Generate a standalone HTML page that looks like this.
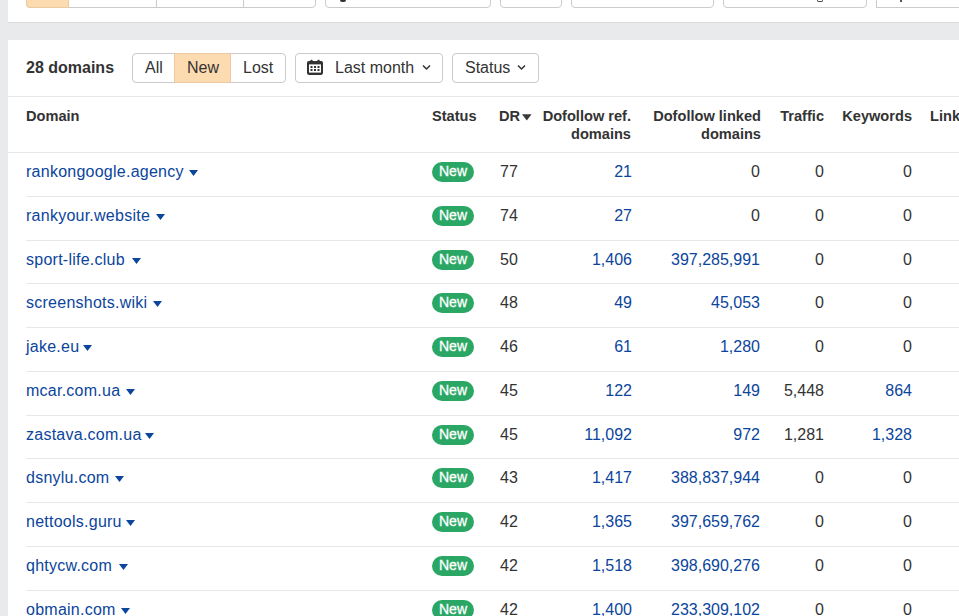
<!DOCTYPE html>
<html><head><meta charset="utf-8"><style>
*{margin:0;padding:0;box-sizing:border-box}
html,body{width:959px;height:616px;overflow:hidden;background:#e9eaec;font-family:"Liberation Sans",sans-serif;color:#333}
.card{position:absolute;left:8px;right:0;background:#fff}
.a{position:absolute;white-space:nowrap}
.btn{position:absolute;border:1px solid #cbcbcb;border-radius:4px;background:#fff}
.hd{font-weight:bold;font-size:14.6px;line-height:18px;color:#333}
.r{text-align:right}
.lnk{color:#0b459c}
.line{position:absolute;height:1px;background:#e7e7e8}
.badge{position:absolute;width:42px;height:20px;border-radius:10px;background:#2ba765;color:#fff;font-size:14px;font-weight:normal;-webkit-text-stroke:0.3px #fff;text-align:center;line-height:18px}
.caret{position:absolute;width:0;height:0;border-left:4px solid transparent;border-right:4px solid transparent;border-top:5px solid #1447a0}
.cell{font-size:16px;line-height:20px}
</style></head><body>

<div class="card" style="top:0;height:23px;border-bottom:1px solid #dcdde0"></div>
<div class="btn" style="left:26px;top:-30px;width:290px;height:38px"><div style="position:absolute;left:-1px;top:-1px;width:43px;height:38px;background:#fddbb0;border:1px solid #ecc9a0;border-radius:0 0 0 4px"></div><div style="position:absolute;left:129px;top:0;width:1px;height:100%;background:#cbcbcb"></div><div style="position:absolute;left:216px;top:0;width:1px;height:100%;background:#cbcbcb"></div></div>
<div class="btn" style="left:325px;top:-30px;width:166px;height:38px"></div>
<div class="a" style="left:340px;top:0;width:6px;height:2px;background:#333;border-radius:0 0 3px 3px"></div>
<div class="btn" style="left:500px;top:-30px;width:62px;height:38px"></div>
<div class="btn" style="left:571px;top:-30px;width:143px;height:38px"></div>
<div class="btn" style="left:723px;top:-30px;width:144px;height:38px"></div>
<div class="a" style="left:817px;top:0;width:6px;height:2px;border:1.5px solid #444;border-top:none;border-radius:0 0 3px 3px"></div>
<div class="btn" style="left:876px;top:-30px;width:100px;height:38px;border-radius:0"></div>
<div class="a" style="left:900px;top:0;width:1.5px;height:2px;background:#555"></div>
<div class="card" style="top:40px;bottom:0"></div>
<div class="a" style="left:26px;top:58px;font-size:16px;font-weight:bold;line-height:20px;color:#333">28 domains</div>
<div class="btn" style="left:132px;top:53px;width:154px;height:30px">
<div style="position:absolute;left:41px;top:-1px;width:57px;height:30px;background:#fddbb0;border:1px solid #ecc9a0"></div>
<div class="a" style="left:12px;top:4px;font-size:16px;line-height:20px">All</div>
<div class="a" style="left:54px;top:4px;font-size:16px;line-height:20px">New</div>
<div class="a" style="left:110px;top:4px;font-size:16px;line-height:20px">Lost</div>
</div>
<div class="btn" style="left:295px;top:53px;width:148px;height:30px">
<svg style="position:absolute;left:11px;top:5px" width="17" height="17" viewBox="0 0 17 17"><rect x="0" y="2" width="16" height="13.9" rx="1.8" fill="#333"/><rect x="3.3" y="0.8" width="2.4" height="3" rx="1" fill="#333"/><rect x="10.3" y="0.8" width="2.4" height="3" rx="1" fill="#333"/><rect x="2" y="5.4" width="12" height="8.2" fill="#fff"/><g fill="#333"><rect x="3.5" y="7" width="2" height="2"/><rect x="7" y="7" width="2" height="2"/><rect x="10.5" y="7" width="2" height="2"/><rect x="3.5" y="10" width="2" height="2"/><rect x="7" y="10" width="2" height="2"/><rect x="10.5" y="10" width="2" height="2"/></g></svg>
<div class="a" style="left:39px;top:4px;font-size:16px;line-height:20px">Last month</div>
<svg style="position:absolute;left:126px;top:10px" width="9" height="7" viewBox="0 0 9 7"><path d="M1 1.5 L4.5 5 L8 1.5" stroke="#333" stroke-width="1.5" fill="none"/></svg>
</div>
<div class="btn" style="left:452px;top:53px;width:87px;height:30px">
<div class="a" style="left:12px;top:4px;font-size:16px;line-height:20px">Status</div>
<svg style="position:absolute;left:64px;top:10px" width="9" height="7" viewBox="0 0 9 7"><path d="M1 1.5 L4.5 5 L8 1.5" stroke="#333" stroke-width="1.5" fill="none"/></svg>
</div>
<div class="line" style="left:8px;right:0;top:96px"></div>
<div class="line" style="left:8px;right:0;top:152px"></div>
<div class="a hd" style="left:26px;top:107px">Domain</div>
<div class="a hd" style="left:432px;top:107px">Status</div>
<div class="a hd" style="left:499px;top:107px">DR</div>
<svg class="a" style="left:521.5px;top:113.5px" width="10" height="7" viewBox="0 0 10 7"><path d="M0 0.3H9.6L4.8 6.6Z" fill="#3a3a3a"/></svg>
<div class="a hd r" style="right:calc(959px - 631px);top:107px">Dofollow ref.<br>domains</div>
<div class="a hd r" style="right:calc(959px - 761px);top:107px">Dofollow linked<br>domains</div>
<div class="a hd r" style="right:calc(959px - 824px);top:107px">Traffic</div>
<div class="a hd r" style="right:calc(959px - 912px);top:107px">Keywords</div>
<div class="a hd" style="left:930px;top:107px">Links</div>
<div class="a cell lnk" style="left:26px;top:162px;letter-spacing:0.25px">rankongoogle.agency<svg style="margin-left:5px;vertical-align:1px" width="9" height="6" viewBox="0 0 9 6"><path d="M0 0H9L4.5 6Z" fill="#0b459c"/></svg></div>
<div class="badge" style="left:432px;top:162px">New</div>
<div class="a cell" style="left:500px;top:162px">77</div>
<div class="a cell r lnk" style="right:327px;top:162px">21</div>
<div class="a cell r " style="right:199px;top:162px">0</div>
<div class="a cell r" style="right:135px;top:162px">0</div>
<div class="a cell r " style="right:47px;top:162px">0</div>
<div class="line" style="left:26px;right:0;top:196px"></div>
<div class="a cell lnk" style="left:26px;top:206px;letter-spacing:0.25px">rankyour.website<svg style="margin-left:5.5px;vertical-align:1px" width="9" height="6" viewBox="0 0 9 6"><path d="M0 0H9L4.5 6Z" fill="#0b459c"/></svg></div>
<div class="badge" style="left:432px;top:206px">New</div>
<div class="a cell" style="left:500px;top:206px">74</div>
<div class="a cell r lnk" style="right:327px;top:206px">27</div>
<div class="a cell r " style="right:199px;top:206px">0</div>
<div class="a cell r" style="right:135px;top:206px">0</div>
<div class="a cell r " style="right:47px;top:206px">0</div>
<div class="line" style="left:26px;right:0;top:240px"></div>
<div class="a cell lnk" style="left:26px;top:250px;letter-spacing:0.25px">sport-life.club<svg style="margin-left:7px;vertical-align:1px" width="9" height="6" viewBox="0 0 9 6"><path d="M0 0H9L4.5 6Z" fill="#0b459c"/></svg></div>
<div class="badge" style="left:432px;top:250px">New</div>
<div class="a cell" style="left:500px;top:250px">50</div>
<div class="a cell r lnk" style="right:327px;top:250px">1,406</div>
<div class="a cell r lnk" style="right:199px;top:250px">397,285,991</div>
<div class="a cell r" style="right:135px;top:250px">0</div>
<div class="a cell r " style="right:47px;top:250px">0</div>
<div class="line" style="left:26px;right:0;top:283px"></div>
<div class="a cell lnk" style="left:26px;top:293px;letter-spacing:0.25px">screenshots.wiki<svg style="margin-left:6px;vertical-align:1px" width="9" height="6" viewBox="0 0 9 6"><path d="M0 0H9L4.5 6Z" fill="#0b459c"/></svg></div>
<div class="badge" style="left:432px;top:293px">New</div>
<div class="a cell" style="left:500px;top:293px">48</div>
<div class="a cell r lnk" style="right:327px;top:293px">49</div>
<div class="a cell r lnk" style="right:199px;top:293px">45,053</div>
<div class="a cell r" style="right:135px;top:293px">0</div>
<div class="a cell r " style="right:47px;top:293px">0</div>
<div class="line" style="left:26px;right:0;top:327px"></div>
<div class="a cell lnk" style="left:26px;top:337px;letter-spacing:0.25px">jake.eu<svg style="margin-left:4px;vertical-align:1px" width="9" height="6" viewBox="0 0 9 6"><path d="M0 0H9L4.5 6Z" fill="#0b459c"/></svg></div>
<div class="badge" style="left:432px;top:337px">New</div>
<div class="a cell" style="left:500px;top:337px">46</div>
<div class="a cell r lnk" style="right:327px;top:337px">61</div>
<div class="a cell r lnk" style="right:199px;top:337px">1,280</div>
<div class="a cell r" style="right:135px;top:337px">0</div>
<div class="a cell r " style="right:47px;top:337px">0</div>
<div class="line" style="left:26px;right:0;top:371px"></div>
<div class="a cell lnk" style="left:26px;top:381px;letter-spacing:0.25px">mcar.com.ua<svg style="margin-left:5.5px;vertical-align:1px" width="9" height="6" viewBox="0 0 9 6"><path d="M0 0H9L4.5 6Z" fill="#0b459c"/></svg></div>
<div class="badge" style="left:432px;top:381px">New</div>
<div class="a cell" style="left:500px;top:381px">45</div>
<div class="a cell r lnk" style="right:327px;top:381px">122</div>
<div class="a cell r lnk" style="right:199px;top:381px">149</div>
<div class="a cell r" style="right:135px;top:381px">5,448</div>
<div class="a cell r lnk" style="right:47px;top:381px">864</div>
<div class="line" style="left:26px;right:0;top:415px"></div>
<div class="a cell lnk" style="left:26px;top:425px;letter-spacing:0.25px">zastava.com.ua<svg style="margin-left:3px;vertical-align:1px" width="9" height="6" viewBox="0 0 9 6"><path d="M0 0H9L4.5 6Z" fill="#0b459c"/></svg></div>
<div class="badge" style="left:432px;top:425px">New</div>
<div class="a cell" style="left:500px;top:425px">45</div>
<div class="a cell r lnk" style="right:327px;top:425px">11,092</div>
<div class="a cell r lnk" style="right:199px;top:425px">972</div>
<div class="a cell r" style="right:135px;top:425px">1,281</div>
<div class="a cell r lnk" style="right:47px;top:425px">1,328</div>
<div class="line" style="left:26px;right:0;top:458px"></div>
<div class="a cell lnk" style="left:26px;top:468px;letter-spacing:0.25px">dsnylu.com<svg style="margin-left:6px;vertical-align:1px" width="9" height="6" viewBox="0 0 9 6"><path d="M0 0H9L4.5 6Z" fill="#0b459c"/></svg></div>
<div class="badge" style="left:432px;top:468px">New</div>
<div class="a cell" style="left:500px;top:468px">43</div>
<div class="a cell r lnk" style="right:327px;top:468px">1,417</div>
<div class="a cell r lnk" style="right:199px;top:468px">388,837,944</div>
<div class="a cell r" style="right:135px;top:468px">0</div>
<div class="a cell r " style="right:47px;top:468px">0</div>
<div class="line" style="left:26px;right:0;top:502px"></div>
<div class="a cell lnk" style="left:26px;top:512px;letter-spacing:0.25px">nettools.guru<svg style="margin-left:4px;vertical-align:1px" width="9" height="6" viewBox="0 0 9 6"><path d="M0 0H9L4.5 6Z" fill="#0b459c"/></svg></div>
<div class="badge" style="left:432px;top:512px">New</div>
<div class="a cell" style="left:500px;top:512px">42</div>
<div class="a cell r lnk" style="right:327px;top:512px">1,365</div>
<div class="a cell r lnk" style="right:199px;top:512px">397,659,762</div>
<div class="a cell r" style="right:135px;top:512px">0</div>
<div class="a cell r " style="right:47px;top:512px">0</div>
<div class="line" style="left:26px;right:0;top:546px"></div>
<div class="a cell lnk" style="left:26px;top:556px;letter-spacing:0.25px">qhtycw.com<svg style="margin-left:7px;vertical-align:1px" width="9" height="6" viewBox="0 0 9 6"><path d="M0 0H9L4.5 6Z" fill="#0b459c"/></svg></div>
<div class="badge" style="left:432px;top:556px">New</div>
<div class="a cell" style="left:500px;top:556px">42</div>
<div class="a cell r lnk" style="right:327px;top:556px">1,518</div>
<div class="a cell r lnk" style="right:199px;top:556px">398,690,276</div>
<div class="a cell r" style="right:135px;top:556px">0</div>
<div class="a cell r " style="right:47px;top:556px">0</div>
<div class="line" style="left:26px;right:0;top:590px"></div>
<div class="a cell lnk" style="left:26px;top:600px;letter-spacing:0.25px">obmain.com<svg style="margin-left:5.3px;vertical-align:1px" width="9" height="6" viewBox="0 0 9 6"><path d="M0 0H9L4.5 6Z" fill="#0b459c"/></svg></div>
<div class="badge" style="left:432px;top:600px">New</div>
<div class="a cell" style="left:500px;top:600px">42</div>
<div class="a cell r lnk" style="right:327px;top:600px">1,400</div>
<div class="a cell r lnk" style="right:199px;top:600px">233,309,102</div>
<div class="a cell r" style="right:135px;top:600px">0</div>
<div class="a cell r " style="right:47px;top:600px">0</div>
</body></html>
